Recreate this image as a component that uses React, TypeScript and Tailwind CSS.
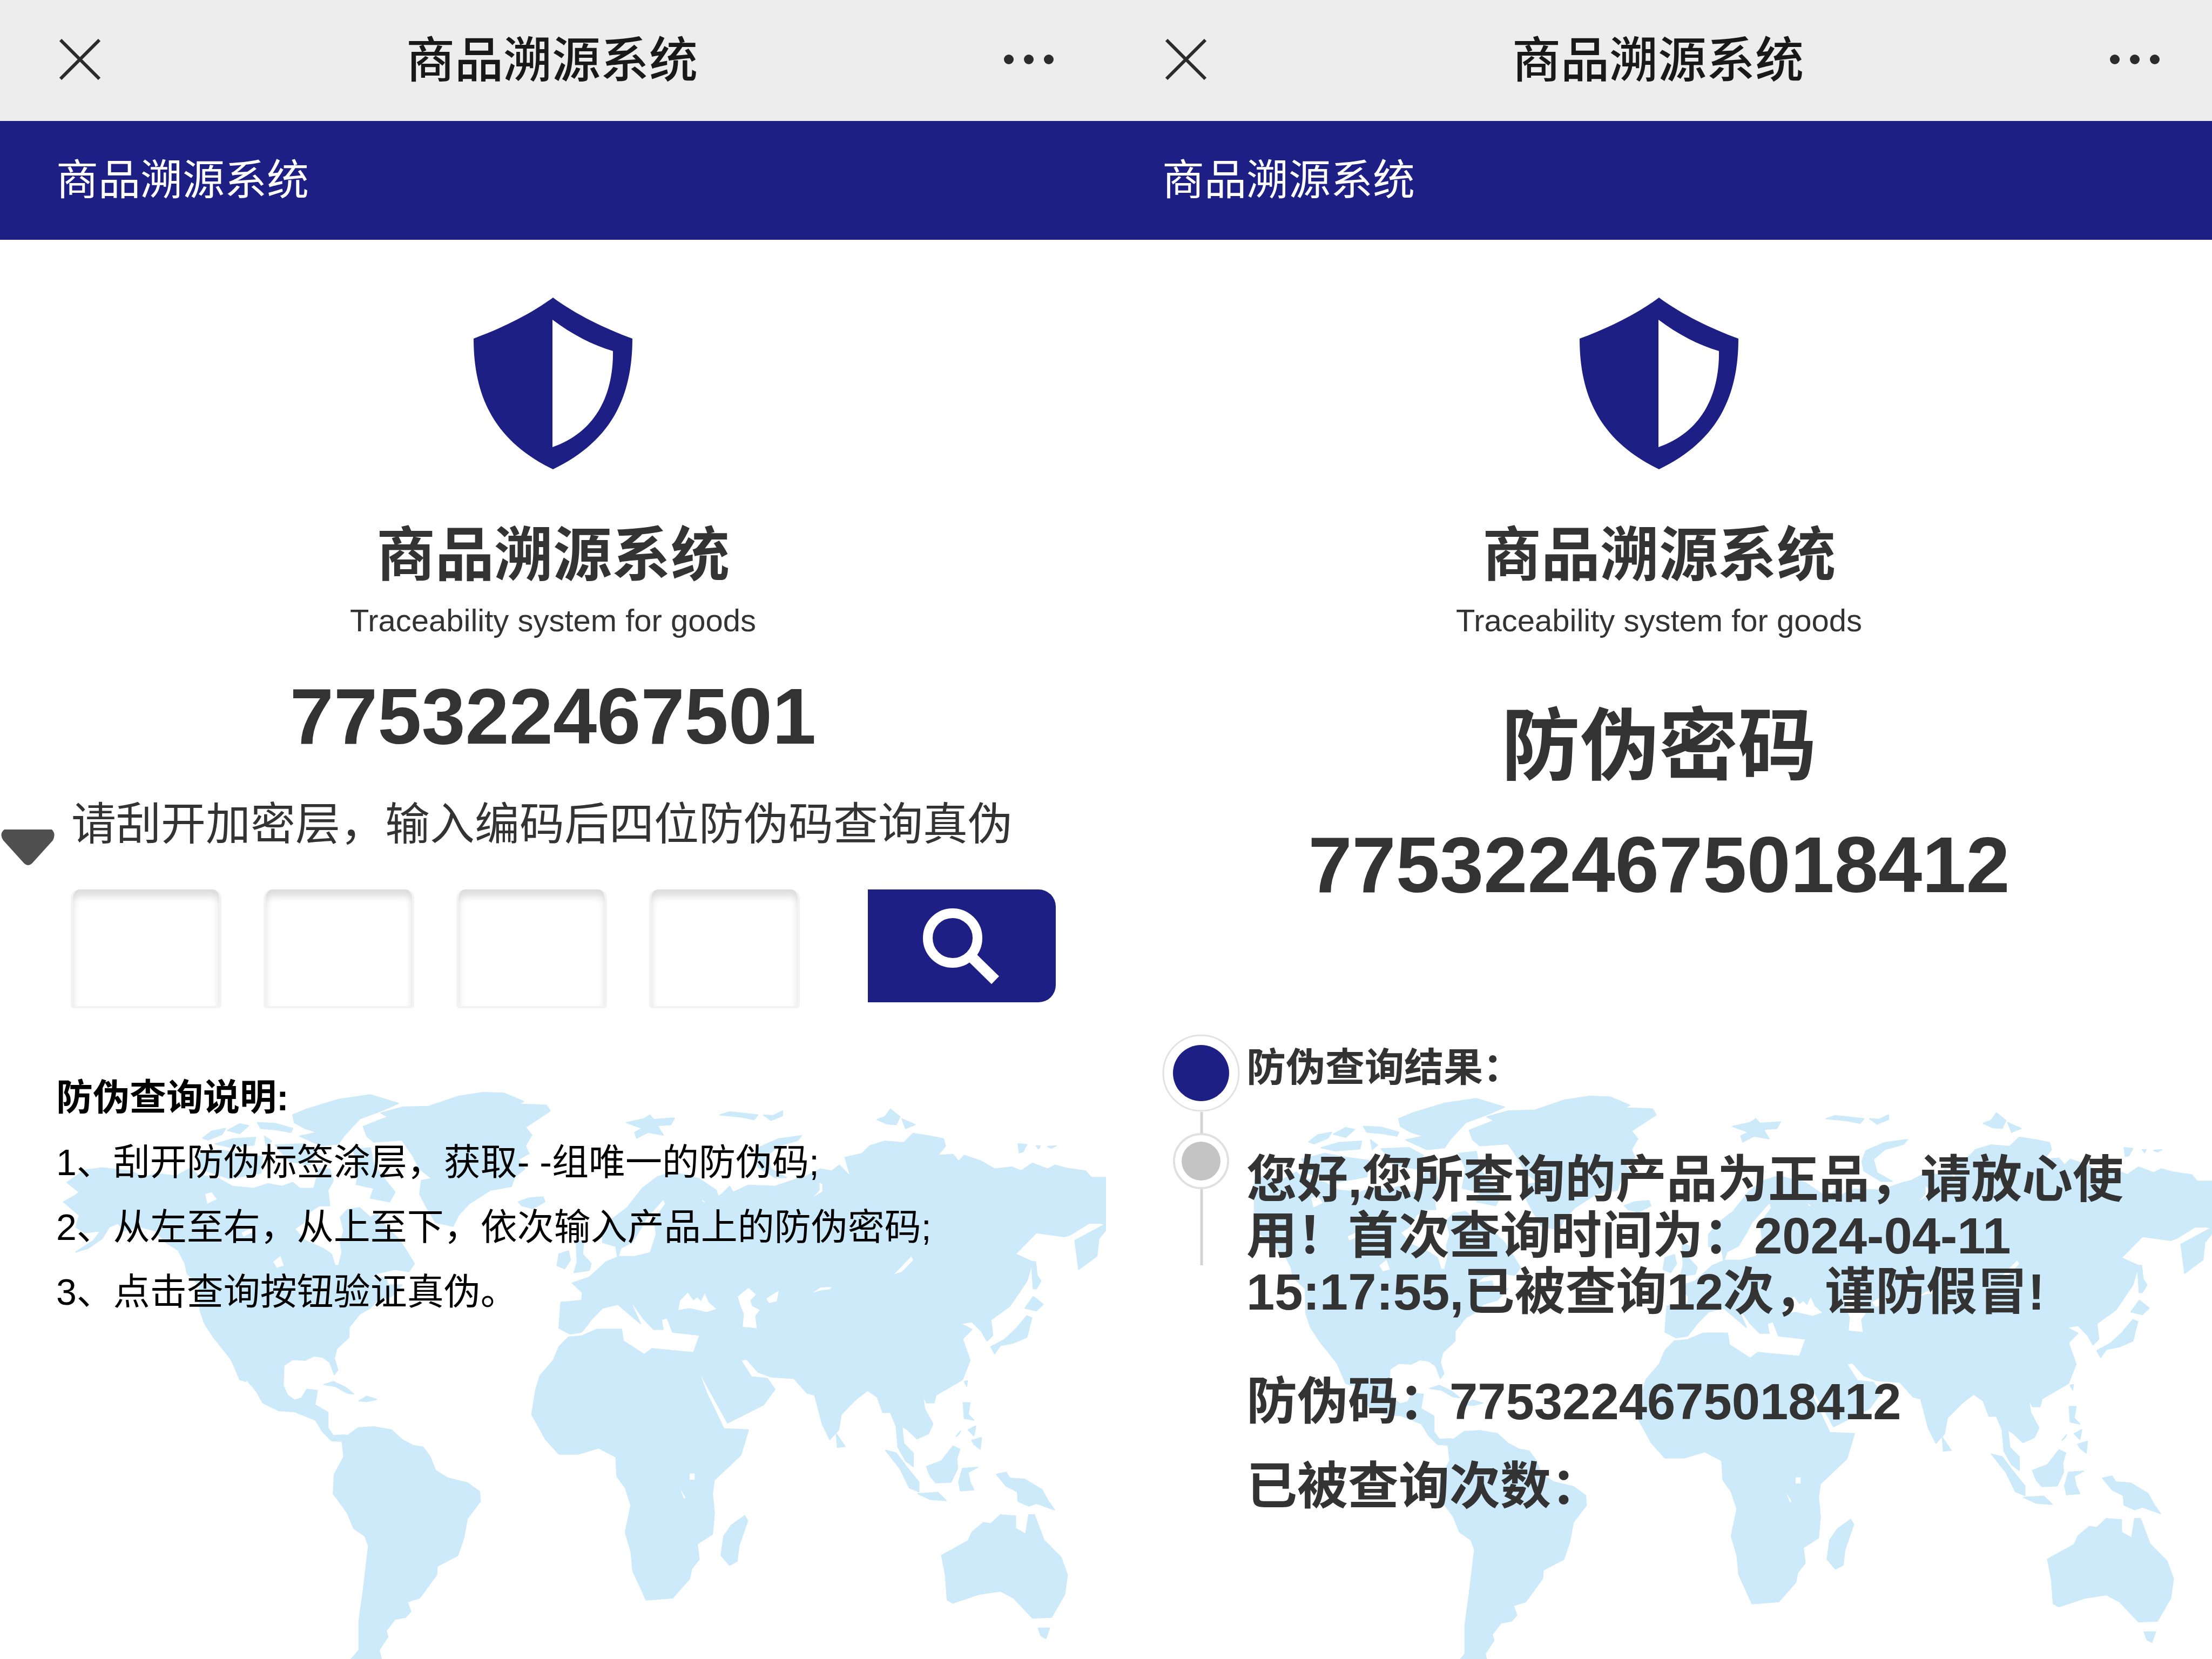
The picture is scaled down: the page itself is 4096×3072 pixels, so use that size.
import type { ReactNode } from "react";

const steps = [
  "1、刮开防伪标签涂层，获取- -组唯一的防伪码;",
  "2、从左至右，从上至下，依次输入产品上的防伪密码;",
  "3、点击查询按钮验证真伪。",
];

const americas = [
  "M190 335L240 303L290 297L370 305L410 322L440 312L500 318L540 298L560 315L620 325L660 345L720 350L760 338L800 345L830 335L850 350L890 350L905 300L935 300L945 330L930 355L935 395L905 395L880 410L860 440L835 455L865 485L915 505L940 520L950 550L960 550L970 515L965 490L975 460L965 425L985 405L1020 400L1050 425L1070 415L1095 450L1130 480L1155 515L1175 545L1160 565L1120 560L1070 570L1050 585L1095 580L1100 600L1140 600L1110 630L1070 640L1050 660L1020 675L990 710L990 735L955 765L948 790L958 820L948 832L935 800L915 787L890 784L865 795L830 793L805 808L803 860L815 885L835 898L855 893L870 870L900 873L893 910L930 930L930 970L945 990L975 988L985 990L975 1005L940 1003L915 980L895 950L835 928L790 925L745 905L727 875L690 835L640 775L605 735L580 700L567 665L565 600L530 570L525 545L505 510L470 490L440 460L400 450L350 460L335 440L310 450L290 480L250 505L215 515L265 485L285 460L240 465L215 450L225 420L180 385L210 370L225 360Z",
  "M985 990L1015 970L1060 967L1110 975L1140 1000L1170 1015L1200 1020L1220 1045L1235 1080L1270 1100L1325 1112L1360 1135L1362 1160L1325 1205L1315 1255L1298 1300L1240 1328L1238 1350L1190 1410L1155 1420L1165 1445L1150 1460L1120 1465L1095 1495L1100 1510L1075 1545L1085 1580L985 1580L1018 1545L1018 1470L1030 1390L1045 1275L1035 1250L1003 1230L985 1190L945 1140L948 1090L975 1045L970 1005Z",
  "M1030 190L1100 165L1080 155L1140 140L1215 138L1300 112L1370 102L1430 104L1485 125L1470 132L1550 135L1560 150L1490 192L1508 212L1490 240L1500 260L1470 275L1488 300L1460 320L1450 345L1390 355L1330 390L1300 420L1285 448L1235 438L1210 400L1190 365L1195 330L1225 325L1190 300L1170 265L1140 225L1060 230L1040 215Z",
  "M830 160L870 145L960 120L1050 108L1130 130L1080 150L1020 170L975 215L960 235L910 240L850 215L900 205L865 195L835 180Z",
  "M1000 250L1050 245L1060 290L1120 360L1105 385L1050 375L1060 350L1010 340L1020 290Z",
  "M575 220L600 202L640 195L630 210L590 225Z",
  "M645 200L680 183L705 188L680 208Z",
  "M730 180L780 182L830 195L825 205L780 198L740 195Z",
  "M610 235L660 222L725 218L720 238L650 243Z",
  "M750 215L770 228L755 240Z",
  "M780 238L860 235L900 255L880 290L820 280Z",
  "M555 265L620 250L680 260L745 268L740 310L650 325L570 300Z",
  "M653 788L668 792L698 850L680 845Z",
  "M918 858L945 850L980 865L1003 882L985 880L950 862Z",
  "M1018 900L1040 888L1068 896L1040 902Z",
  "M1470 385L1500 375L1540 372L1545 385L1510 402L1480 395Z",
];

const americasLakes = [
  "M582 365L600 360L615 378L588 390Z",
  "M775 540L795 525L805 550L785 555Z",
  "M685 465L720 450L725 460L690 475Z",
];

const oldWorld = [
  "M50 712L55 645L110 640L112 620L85 595L130 580L175 540L205 528L200 500L165 490L165 460L190 430L230 400L270 350L310 320L350 308L420 325L465 355L470 370L440 385L422 375L430 388L465 375L480 365L500 345L510 360L550 342L620 345L680 325L700 320L740 300L770 305L790 290L820 320L805 270L850 260L870 240L910 228L960 232L985 208L1030 215L1065 222L1070 240L1050 265L1090 262L1105 280L1120 265L1165 280L1200 300L1245 295L1270 305L1300 285L1340 300L1360 290L1390 298L1440 305L1455 322L1500 322L1500 446L1480 440L1450 440L1400 470L1385 475L1310 465L1255 520L1300 540L1285 590L1240 655L1190 690L1195 730L1180 745L1165 720L1140 695L1110 700L1140 715L1115 740L1135 795L1115 845L1045 885L1040 905L1020 905L1010 885L1015 920L1037 960L1025 985L995 998L970 975L955 965L960 1010L985 1035L985 1070L965 1055L945 1020L940 965L925 930L905 930L890 890L865 873L835 895L795 935L788 975L765 1000L745 960L725 885L705 880L670 842L610 838L575 825L545 792L530 795L558 838L600 842L620 870L590 910L540 935L495 957L460 895L415 815L440 880L485 972L550 975L530 1040L460 1105L455 1140L460 1190L455 1245L415 1270L420 1310L400 1335L395 1360L350 1410L280 1415L245 1340L240 1290L225 1240L240 1170L225 1125L203 1095L200 1045L155 1022L100 1038L50 1038L15 1000L-22 935L-11 870L0 835L35 795L50 760L75 735L110 732L150 715L215 715L220 745L275 780L295 765L405 775L422 730L350 722L335 685L320 690L325 715L300 715L275 690L235 635L265 700L205 650L165 660L135 690L110 722L80 727Z",
  "M570 270L580 243L630 222L690 214L680 226L630 240L600 265L610 300L650 322L620 322L575 295Z",
  "M228 180L275 170L290 160L300 172L355 168L345 185L310 188L325 212L285 205L255 220L250 205L270 195Z",
  "M475 160L500 152L575 160L565 172L530 165Z",
  "M590 160L615 162L640 150L640 162L610 174Z",
  "M890 172L910 165L925 145L950 165L940 185L915 183Z",
  "M955 170L990 185L965 195Z",
  "M1262 235L1285 237L1275 255L1265 258Z",
  "M1310 240L1320 240L1316 248Z",
  "M1340 242L1362 240L1350 246Z",
  "M95 480L115 490L112 520L135 545L130 562L90 568L98 540Z",
  "M45 550L50 520L75 512L80 535L65 558Z",
  "M1497 440L1450 465L1412 485L1418 530L1422 560L1470 525L1475 480L1500 450Z",
  "M1297 540L1308 540L1312 575L1322 590L1310 610L1302 610Z",
  "M1302 630L1328 650L1310 667L1280 660Z",
  "M1285 680L1298 685L1285 735L1250 750L1215 757L1200 778L1190 760L1225 742L1255 715Z",
  "M1120 850L1128 848L1126 862Z",
  "M1117 905L1135 905L1130 935L1145 950L1120 945Z",
  "M1130 975L1150 965L1145 990Z",
  "M1140 1002L1165 995L1162 1025L1145 1012Z",
  "M1098 992L1110 978L1106 985Z",
  "M1020 1070L1060 1055L1090 1017L1108 1025L1100 1050L1102 1075L1085 1110L1045 1112L1030 1095Z",
  "M912 1028L940 1035L975 1080L1000 1110L1000 1135L975 1125L950 1075Z",
  "M997 1140L1050 1137L1072 1158L1030 1155Z",
  "M1115 1075L1155 1072L1130 1085L1135 1110L1145 1130L1110 1133L1105 1110Z",
  "M1205 1090L1230 1085L1240 1100L1280 1103L1325 1130L1342 1160L1358 1182L1310 1165L1290 1172L1262 1160L1260 1135L1230 1120Z",
  "M782 985L805 1018L785 1020Z",
  "M1060 1300L1130 1262L1140 1240L1170 1215L1190 1218L1215 1195L1255 1198L1255 1230L1282 1245L1290 1195L1305 1195L1330 1260L1375 1305L1392 1350L1385 1400L1350 1460L1300 1462L1250 1410L1215 1392L1160 1400L1090 1423L1075 1415L1070 1350Z",
  "M1315 1488L1345 1488L1335 1515L1322 1508Z",
  "M485 1250L505 1222L540 1197L548 1210L525 1275L520 1315L500 1325L478 1300Z",
];

const oldWorldSeas = [
  "M365 665L370 640L390 620L405 640L415 632L425 642L435 622L445 645L465 662L440 670L395 660Z",
  "M522 630L550 608L570 625L555 640L560 655L580 665L568 680L572 712L535 708L538 675L528 650Z",
  "M597 635L630 615L625 642L605 647Z",
  "M720 620L740 607L770 605L765 611L740 614Z",
  "M935 572L980 526L985 536L955 566Z",
  "M208 525L215 505L245 490L270 450L280 430L325 380L330 390L300 430L305 470L295 500L290 515L250 525Z",
  "M722 372L738 355L738 335L745 340L745 358Z",
  "M395 1088L408 1088L408 1104L395 1104Z",
  "M370 1128L384 1150L380 1153Z",
];

function WorldMap() {
  return (
    <svg
      viewBox="0 0 2048 1122"
      className="col-start-1 row-start-1 mt-[50px] block w-full"
      strokeLinejoin="round"
      aria-hidden="true"
    >
      <g transform="scale(0.653 0.7156)">
        {americas.map((d) => (
          <path key={d} d={d} fill="#cdeafb" stroke="#cdeafb" strokeWidth="3" />
        ))}
        {americasLakes.map((d) => (
          <path key={d} d={d} fill="#fff" />
        ))}
      </g>
      <g transform="translate(1000 0) scale(0.7015 0.7156)">
        {oldWorld.map((d) => (
          <path key={d} d={d} fill="#cdeafb" stroke="#cdeafb" strokeWidth="3" />
        ))}
        {oldWorldSeas.map((d) => (
          <path key={d} d={d} fill="#fff" />
        ))}
      </g>
    </svg>
  );
}

function Shield() {
  return (
    <svg viewBox="0 0 294 318" className="h-[318px] w-[294px]" aria-hidden="true">
      <path
        d="M147 0C190 32 245 58 294 76C294 190 250 268 147 318C44 268 0 190 0 76C49 58 104 32 147 0Z"
        fill="#1e1f85"
      />
      <path d="M146 41C182 68 220 88 258 99C259 178 228 248 146 277Z" fill="#fff" />
    </svg>
  );
}

function Timeline() {
  return (
    <svg viewBox="0 0 174 430" className="h-[430px] w-[174px] shrink-0 bg-white" aria-hidden="true">
      <path d="M77 146V186M77 288V430" stroke="#d4d4d4" strokeWidth="5" />
      <circle cx="76" cy="74" r="70" fill="#fff" stroke="#e3e1e1" strokeWidth="3" />
      <circle cx="76" cy="74" r="52" fill="#1e1f85" />
      <circle cx="76" cy="237" r="50" fill="#fff" stroke="#e0e0e0" strokeWidth="4" />
      <circle cx="76" cy="237" r="36" fill="#c4c4c4" />
    </svg>
  );
}

function Screen({ children }: { children: ReactNode }) {
  return (
    <div className="flex min-w-0 flex-col overflow-hidden">
      <header className="flex h-56 items-center justify-between bg-[#ededed] pr-[96px] pl-[110px]">
        <button type="button" aria-label="关闭" className="mb-1">
          <svg viewBox="0 0 76 76" className="size-[76px]" stroke="#2b2b2b" strokeWidth="6">
            <path d="M2 2L74 74M74 2L2 74" />
          </svg>
        </button>
        <h1 className="text-[90px] leading-[112px] font-medium text-[#191919]">商品溯源系统</h1>
        <button type="button" aria-label="更多" className="mb-1">
          <svg viewBox="0 0 94 20" className="h-5 w-[94px]" fill="#2b2b2b">
            <circle cx="10" cy="10" r="9" />
            <circle cx="47" cy="10" r="9" />
            <circle cx="84" cy="10" r="9" />
          </svg>
        </button>
      </header>
      <nav className="flex h-[220px] items-center bg-[#1e1f85] px-[104px] text-[78px] text-white">
        商品溯源系统
      </nav>
      <div className="flex flex-col items-center pt-[107px]">
        <Shield />
        <h2 className="mt-[87px] text-[109px] leading-[144px] font-bold">商品溯源系统</h2>
        <p className="mt-[13px] text-[58px] leading-[72px]">Traceability system for goods</p>
      </div>
      {children}
    </div>
  );
}

function QueryScreen() {
  return (
    <Screen>
      <p className="mt-[58px] text-center text-[146px] leading-[168px] font-bold">775322467501</p>
      <div className="mt-[66px] flex">
        <svg viewBox="0 0 104 70" className="mt-[57px] h-[70px] w-[104px] shrink-0" aria-hidden="true">
          <path d="M8 2H96Q104 10 98 22L60 64Q52 72 44 64L6 22Q-2 10 8 2Z" fill="#505050" />
        </svg>
        <label htmlFor="code-0" className="ml-7 text-[83px] leading-[100px] whitespace-nowrap">
          请刮开加密层，输入编码后四位防伪码查询真伪
        </label>
      </div>
      <form className="mt-[43px] flex h-[253px] items-start pl-[131px]">
        <div className="flex gap-[78px]">
          {[0, 1, 2, 3].map((n) => (
            <input
              key={n}
              id={`code-${n}`}
              aria-label={`防伪码第${n + 1}位`}
              maxLength={1}
              className="h-[220px] w-[279px] rounded-t-2xl rounded-b-md border-4 border-t-0 border-[#f3f3f3] bg-white text-center text-[84px] shadow-[inset_0_12px_14px_#dcdcdc]"
            />
          ))}
        </div>
        <button
          type="button"
          aria-label="查询"
          className="ml-[126px] h-[209px] w-[348px] rounded-r-[32px] bg-[#1e1f85]"
        >
          <svg viewBox="0 0 348 209" className="size-full" fill="none" stroke="#fff">
            <circle cx="157" cy="90" r="46" strokeWidth="18" />
            <path d="M188 121L236 168" strokeWidth="20" />
          </svg>
        </button>
      </form>
      <section className="grid">
        <WorldMap />
        <div className="z-10 col-start-1 row-start-1 pt-[72px] pl-[104px] text-[68px] leading-[120px] text-black">
          <h3 className="font-bold">防伪查询说明:</h3>
          {steps.map((step) => (
            <p key={step}>{step}</p>
          ))}
        </div>
      </section>
    </Screen>
  );
}

function ResultScreen() {
  return (
    <Screen>
      <div className="mt-[87px] h-[635px] text-center text-[146px] leading-[220px] font-bold">
        <h3>防伪密码</h3>
        <p>7753224675018412</p>
      </div>
      <section className="grid">
        <WorldMap />
        <div className="z-10 col-start-1 row-start-1 flex items-start pt-[6px] pr-[100px] pl-[100px]">
          <Timeline />
          <div className="-ml-[14px] text-[94px] leading-[104px] font-bold">
            <h4 className="mt-3 text-[73px]">防伪查询结果：</h4>
            <p className="mt-[104px]">
              您好,您所查询的产品为正品，请放心使用！首次查询时间为：2024-04-11 15:17:55,已被查询12次，谨防假冒!
            </p>
            <p className="mt-[99px]">防伪码：7753224675018412</p>
            <p className="mt-[53px]">已被查询次数：</p>
          </div>
        </div>
      </section>
    </Screen>
  );
}

export default function App() {
  return (
    <main className="grid min-h-screen grid-cols-2 bg-white font-['Liberation_Sans','Noto_Sans_CJK_SC',sans-serif] text-[#333]">
      <QueryScreen />
      <ResultScreen />
    </main>
  );
}
